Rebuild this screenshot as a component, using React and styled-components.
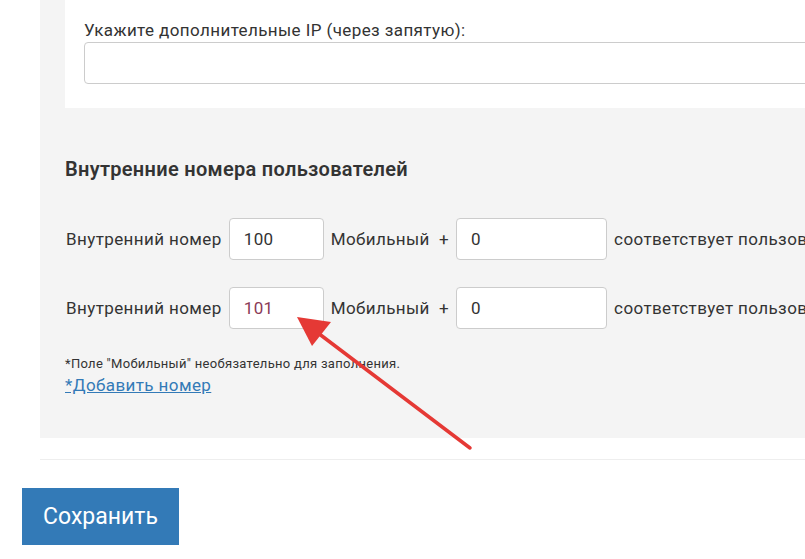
import React from 'react';
import styled, { createGlobalStyle } from 'styled-components';

const Global = createGlobalStyle`
  body { margin: 0; font-family: Roboto, "Noto Sans", sans-serif; color: #333; background: #fff; overflow: hidden; }
`;

const Page = styled.div`
  position: relative;
  width: 805px;
  height: 559px;
  overflow: hidden;
`;

const Panel = styled.div`
  margin-left: 40px;
  width: 900px;
  height: 438px;
  background: #f4f4f4;
  padding: 0 0 0 25px;
  box-sizing: border-box;
`;

const Card = styled.div`
  background: #fff;
  height: 108px;
  padding: 20px 0 0 19px;
  box-sizing: border-box;
`;

const Label = styled.div`
  font-size: 17px;
  letter-spacing: 0.4px;
  line-height: 20px;
  margin-bottom: 2px;
`;

const Input = styled.div`
  box-sizing: border-box;
  width: ${p => p.w}px;
  height: 42px;
  background: #fff;
  border: 1px solid #ccc;
  border-radius: 4px;
  padding: 0 14px;
  display: flex;
  align-items: center;
  font-size: 17px;
  color: ${p => p.accent ? '#8a3b57' : '#333'};
  flex-shrink: 0;
`;

const Heading = styled.h3`
  margin: 49px 0 37px;
  font-size: 20px;
  letter-spacing: 0.3px;
  font-weight: 600;
  line-height: 24px;
`;

const Row = styled.div`
  display: flex;
  align-items: center;
  gap: 7px;
  font-size: 17px;
  letter-spacing: 0.4px;
  white-space: nowrap;
  margin-bottom: 27px;
`;

const Note = styled.div`
  font-size: 13px;
  letter-spacing: 0.3px;
  margin-top: 11px;
`;

const Link = styled.a`
  font-size: 17px;
  letter-spacing: 0.4px;
  color: #337ab7;
  text-decoration: underline;
  display: inline-block;
  margin-top: 4px;
`;

const Divider = styled.div`
  margin: 21px 0 0 40px;
  height: 1px;
  background: #eee;
`;

const Button = styled.button`
  margin: 28px 0 0 22px;
  width: 157px;
  height: 57px;
  background: #337ab7;
  border: none;
  color: #fff;
  font-family: inherit;
  font-size: 23px;
`;

const Arrow = styled.svg`
  position: absolute;
  left: 0;
  top: 0;
  pointer-events: none;
`;

const rows = ['100', '101'];

export default function App() {
  return (
    <Page>
      <Global />
      <Panel>
        <Card>
          <Label>Укажите дополнительные IP (через запятую):</Label>
          <Input w={760} />
        </Card>
        <Heading>Внутренние номера пользователей</Heading>
        {rows.map((n, i) => (
          <Row key={n}>
            <span style={{ marginLeft: 1 }}>Внутренний номер</span>
            <Input w={95} accent={i === 1}>{n}</Input>
            <span>Мобильный &nbsp;+</span>
            <Input w={151}>0</Input>
            <span>соответствует пользователю</span>
          </Row>
        ))}
        <Note>*Поле "Мобильный" необязательно для заполнения.</Note>
        <Link>*Добавить номер</Link>
      </Panel>
      <Divider />
      <Button>Сохранить</Button>
      <Arrow width="805" height="559">
        <line x1="470" y1="448" x2="318" y2="333" stroke="#e53935" strokeWidth="3.5" strokeLinecap="round" />
        <polygon points="297,317 331,322 312,346" fill="#e53935" />
      </Arrow>
    </Page>
  );
}
